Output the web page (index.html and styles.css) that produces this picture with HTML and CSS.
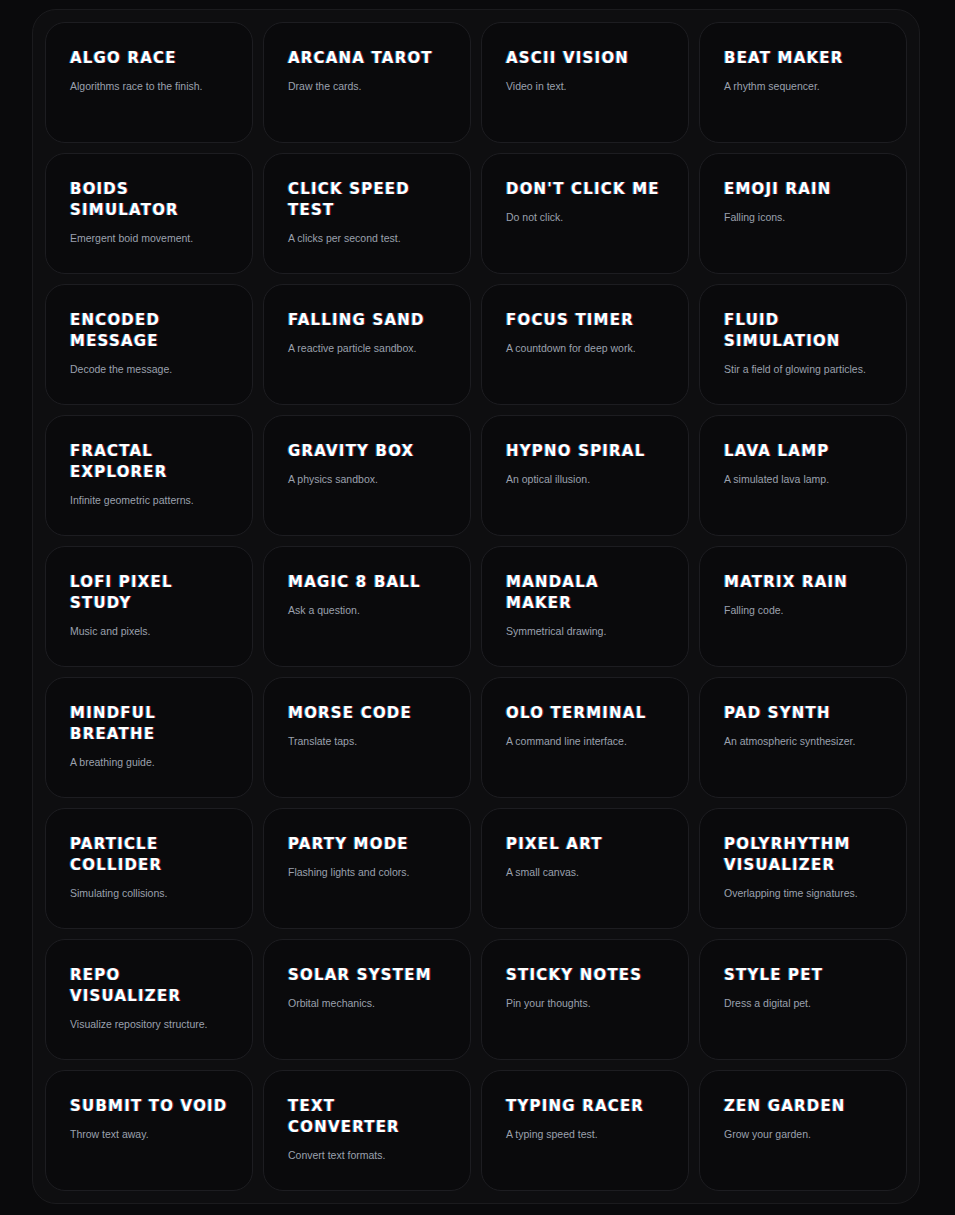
FILE: index.html
```html
<!DOCTYPE html>
<html lang="en">
	<head>
		<meta charset="utf-8">
		<meta name="viewport" content="width=device-width, initial-scale=1">
		<title>Apps</title>
		<link rel="stylesheet" href="styles.css">
	</head>
	<body>
		<main class="apps">
			<a class="app" href="#"><h2 class="app-title">Algo Race</h2><p class="app-desc">Algorithms race to the finish.</p></a>
			<a class="app" href="#"><h2 class="app-title">Arcana Tarot</h2><p class="app-desc">Draw the cards.</p></a>
			<a class="app" href="#"><h2 class="app-title">ASCII Vision</h2><p class="app-desc">Video in text.</p></a>
			<a class="app" href="#"><h2 class="app-title">Beat Maker</h2><p class="app-desc">A rhythm sequencer.</p></a>

			<a class="app" href="#"><h2 class="app-title">Boids Simulator</h2><p class="app-desc">Emergent boid movement.</p></a>
			<a class="app" href="#"><h2 class="app-title">Click Speed Test</h2><p class="app-desc">A clicks per second test.</p></a>
			<a class="app" href="#"><h2 class="app-title">Don't Click Me</h2><p class="app-desc">Do not click.</p></a>
			<a class="app" href="#"><h2 class="app-title">Emoji Rain</h2><p class="app-desc">Falling icons.</p></a>

			<a class="app" href="#"><h2 class="app-title">Encoded Message</h2><p class="app-desc">Decode the message.</p></a>
			<a class="app" href="#"><h2 class="app-title">Falling Sand</h2><p class="app-desc">A reactive particle sandbox.</p></a>
			<a class="app" href="#"><h2 class="app-title">Focus Timer</h2><p class="app-desc">A countdown for deep work.</p></a>
			<a class="app" href="#"><h2 class="app-title">Fluid Simulation</h2><p class="app-desc">Stir a field of glowing particles.</p></a>

			<a class="app" href="#"><h2 class="app-title">Fractal Explorer</h2><p class="app-desc">Infinite geometric patterns.</p></a>
			<a class="app" href="#"><h2 class="app-title">Gravity Box</h2><p class="app-desc">A physics sandbox.</p></a>
			<a class="app" href="#"><h2 class="app-title">Hypno Spiral</h2><p class="app-desc">An optical illusion.</p></a>
			<a class="app" href="#"><h2 class="app-title">Lava Lamp</h2><p class="app-desc">A simulated lava lamp.</p></a>

			<a class="app" href="#"><h2 class="app-title">Lofi Pixel Study</h2><p class="app-desc">Music and pixels.</p></a>
			<a class="app" href="#"><h2 class="app-title">Magic 8 Ball</h2><p class="app-desc">Ask a question.</p></a>
			<a class="app" href="#"><h2 class="app-title">Mandala Maker</h2><p class="app-desc">Symmetrical drawing.</p></a>
			<a class="app" href="#"><h2 class="app-title">Matrix Rain</h2><p class="app-desc">Falling code.</p></a>

			<a class="app" href="#"><h2 class="app-title">Mindful Breathe</h2><p class="app-desc">A breathing guide.</p></a>
			<a class="app" href="#"><h2 class="app-title">Morse Code</h2><p class="app-desc">Translate taps.</p></a>
			<a class="app" href="#"><h2 class="app-title">OLO Terminal</h2><p class="app-desc">A command line interface.</p></a>
			<a class="app" href="#"><h2 class="app-title">Pad Synth</h2><p class="app-desc">An atmospheric synthesizer.</p></a>

			<a class="app" href="#"><h2 class="app-title">Particle Collider</h2><p class="app-desc">Simulating collisions.</p></a>
			<a class="app" href="#"><h2 class="app-title">Party Mode</h2><p class="app-desc">Flashing lights and colors.</p></a>
			<a class="app" href="#"><h2 class="app-title">Pixel Art</h2><p class="app-desc">A small canvas.</p></a>
			<a class="app" href="#"><h2 class="app-title">Polyrhythm Visualizer</h2><p class="app-desc">Overlapping time signatures.</p></a>

			<a class="app" href="#"><h2 class="app-title">Repo Visualizer</h2><p class="app-desc">Visualize repository structure.</p></a>
			<a class="app" href="#"><h2 class="app-title">Solar System</h2><p class="app-desc">Orbital mechanics.</p></a>
			<a class="app" href="#"><h2 class="app-title">Sticky Notes</h2><p class="app-desc">Pin your thoughts.</p></a>
			<a class="app" href="#"><h2 class="app-title">Style Pet</h2><p class="app-desc">Dress a digital pet.</p></a>

			<a class="app" href="#"><h2 class="app-title">Submit to Void</h2><p class="app-desc">Throw text away.</p></a>
			<a class="app" href="#"><h2 class="app-title">Text Converter</h2><p class="app-desc">Convert text formats.</p></a>
			<a class="app" href="#"><h2 class="app-title">Typing Racer</h2><p class="app-desc">A typing speed test.</p></a>
			<a class="app" href="#"><h2 class="app-title">Zen Garden</h2><p class="app-desc">Grow your garden.</p></a>
		</main>
	</body>
</html>
```

FILE: styles.css
```css
body {
	margin: 0;
	padding: 9px 0 11px 32px;
	background-color: #0a0a0c;
	font-family: 'Liberation Sans', Arial, sans-serif;
}

/* App launcher grid */

.apps {
	box-sizing: border-box;
	width: 888px;
	display: grid;
	grid-template-columns: repeat(4, 1fr);
	grid-auto-rows: 121px;
	gap: 10px;
	padding: 12px;
	background-color: #0e0e10;
	border: 1px solid #1b1b1e;
	border-radius: 24px;
}

.app {
	box-sizing: border-box;
	display: block;
	padding: 25px 24px 24px;
	background-color: #0a0a0c;
	border: 1px solid #1d1d21;
	border-radius: 20px;
	text-decoration: none;
}

.app-title {
	margin: 0;
	font-family: 'DejaVu Sans', Verdana, sans-serif;
	font-size: 15px;
	font-weight: 700;
	line-height: 21px;
	letter-spacing: 1.2px;
	text-transform: uppercase;
	color: #ffffff;
	/* slight rgb split on the headings */
	text-shadow: -1px 0 rgba(0, 190, 255, 0.6), 1px 0 rgba(255, 30, 60, 0.5);
}

.app-desc {
	margin: 9px 0 0;
	font-size: 10.5px;
	line-height: 16px;
	color: #9ba1ae;
}
```
